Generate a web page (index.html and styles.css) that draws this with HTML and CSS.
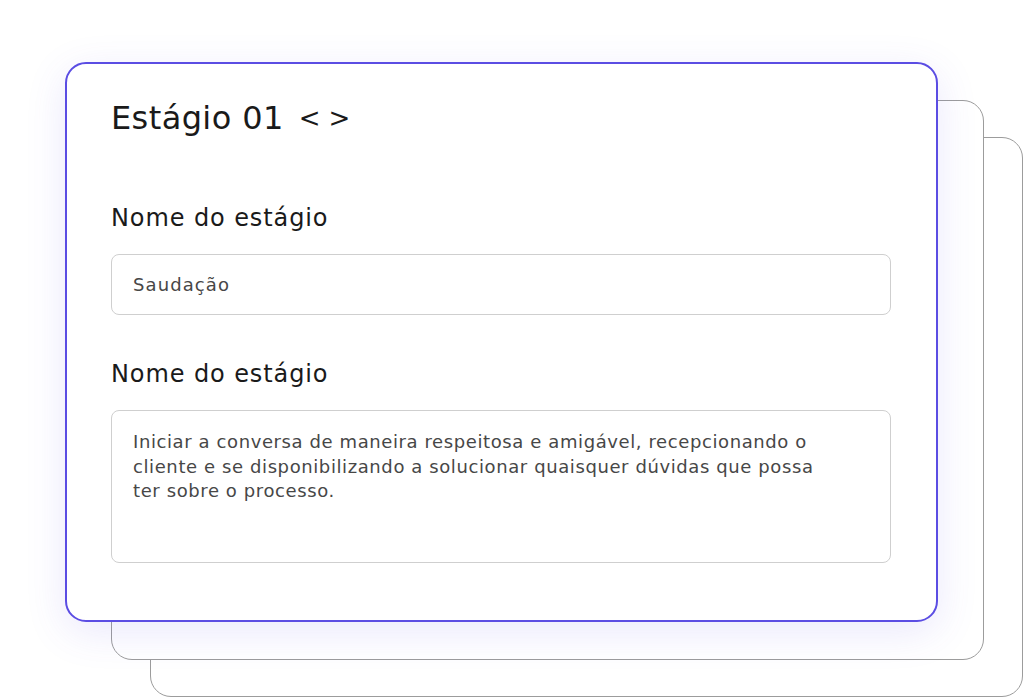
FILE: index.html
```html
<!DOCTYPE html>
<html lang="pt-BR">
<head>
<meta charset="utf-8">
<title>Estágio 01</title>
<link rel="stylesheet" href="styles.css">
</head>
<body>
<div class="stage">
  <div class="card card-back card-back-2"></div>
  <div class="card card-back card-back-1"></div>
  <section class="card card-main">
    <header class="card-header">
      <h1 class="card-title">Estágio 01</h1>
      <div class="nav">
        <span class="nav-btn">&lt;</span>
        <span class="nav-btn">&gt;</span>
      </div>
    </header>
    <div class="field">
      <label class="field-label">Nome do estágio</label>
      <div class="input">Saudação</div>
    </div>
    <div class="field">
      <label class="field-label">Nome do estágio</label>
      <div class="textarea">Iniciar a conversa de maneira respeitosa e amigável, recepcionando o
cliente e se disponibilizando a solucionar quaisquer dúvidas que possa
ter sobre o processo.</div>
    </div>
  </section>
</div>
</body>
</html>
```

FILE: styles.css
```css
html, body {
  margin: 0;
  padding: 0;
  background: #ffffff;
}

body {
  font-family: "DejaVu Sans", "Open Sans", sans-serif;
  color: #1c1c1c;
  overflow: hidden;
  width: 1024px;
  height: 698px;
}

.stage {
  display: grid;
  padding: 62px 0 0 65px;
}

.card {
  grid-area: 1 / 1;
  box-sizing: border-box;
  width: 873px;
  height: 560px;
  border-radius: 21px;
  background: #ffffff;
}

.card-back {
  border: 1px solid #9c9c9c;
}

.card-back-1 {
  margin: 38px 0 0 46px;
}

.card-back-2 {
  margin: 75px 0 0 85px;
}

.card-main {
  position: relative;
  z-index: 1;
  border: 2px solid #5b4de3;
  box-shadow: 0 10px 40px rgba(95, 80, 230, 0.13);
  padding: 34px 45px 0 44px;
  display: flex;
  flex-direction: column;
}

.card-header {
  display: flex;
  align-items: center;
  gap: 15px;
  height: 40px;
}

.card-title {
  margin: 0;
  font-size: 32px;
  line-height: 40px;
  font-weight: 400;
  letter-spacing: 0.4px;
  color: #1a1a1a;
}

.nav {
  display: flex;
  gap: 8px;
  font-size: 26px;
  line-height: 40px;
  color: #1a1a1a;
}

.field {
  display: flex;
  flex-direction: column;
}

.field-label {
  font-size: 24px;
  line-height: 30px;
  margin: 65px 0 21px;
  letter-spacing: 0.9px;
  color: #1a1a1a;
}

.field + .field .field-label {
  margin-top: 44px;
}

.input {
  box-sizing: border-box;
  height: 61px;
  border: 1px solid #cfcfcf;
  border-radius: 8px;
  padding: 0 21px;
  display: flex;
  align-items: center;
  font-size: 18px;
  color: #474747;
  letter-spacing: 1.1px;
}

.textarea {
  box-sizing: border-box;
  height: 153px;
  border: 1px solid #cfcfcf;
  border-radius: 8px;
  padding: 19px 21px;
  font-size: 18px;
  line-height: 24.5px;
  color: #474747;
  white-space: pre-line;
  letter-spacing: 0.6px;
}
```
